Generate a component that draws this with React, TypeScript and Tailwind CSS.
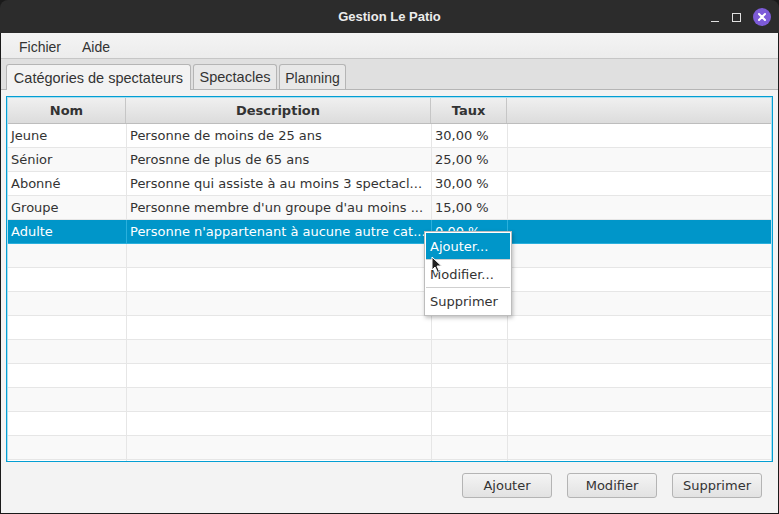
import React from 'react';

const rows = [
  { nom: 'Jeune', desc: 'Personne de moins de 25 ans', taux: '30,00 %' },
  { nom: 'Sénior', desc: 'Perosnne de plus de 65 ans', taux: '25,00 %' },
  { nom: 'Abonné', desc: 'Personne qui assiste à au moins 3 spectacl...', taux: '30,00 %' },
  { nom: 'Groupe', desc: "Personne membre d'un groupe d'au moins ...", taux: '15,00 %' },
  { nom: 'Adulte', desc: "Personne n'appartenant à aucune autre cat...", taux: '0,00 %' },
];

const emptyRows = Array.from({ length: 10 }, (_, i) => i);

const table = "font-['DejaVu_Sans',sans-serif] text-[13px]";

function Row({ nom, desc, taux, index, selected }: { nom: string; desc: string; taux: string; index: number; selected?: boolean }) {
  const bg = selected ? 'bg-[#0096c9] text-white' : index % 2 === 0 ? 'bg-white text-[#333]' : 'bg-[#f9f9f9] text-[#333]';
  const line = selected ? 'border-[#2ab0dd]' : 'border-[#e6e6e6]';
  return (
    <div className={`flex h-[24px] shrink-0 border-b ${line} ${bg}`}>
      <div className={`w-[119px] shrink-0 border-r ${line} pl-[3px] leading-[23px] whitespace-nowrap overflow-hidden`}>{nom}</div>
      <div className={`w-[305px] shrink-0 border-r ${line} pl-[3px] leading-[23px] whitespace-nowrap overflow-hidden`}>{desc}</div>
      <div className={`w-[76px] shrink-0 border-r ${line} pl-[3px] leading-[23px] whitespace-nowrap overflow-hidden`}>{taux}</div>
      <div className="flex-1" />
    </div>
  );
}

function Button({ label }: { label: string }) {
  return (
    <button className="w-[90px] h-[25px] rounded-[3px] border border-[#b4b4b4] bg-gradient-to-b from-[#f4f4f4] to-[#e2e2e2] text-[13px] text-[#333] font-['DejaVu_Sans',sans-serif] leading-none">
      {label}
    </button>
  );
}

export default function App() {
  return (
    <div className="w-[779px] h-[514px] bg-[#1a1a1a] flex flex-col overflow-hidden">
      {/* Title bar */}
      <div className="h-[33px] shrink-0 bg-[#2c2c2c] rounded-t-[8px] flex items-center relative">
        <div className="flex-1 text-center text-[13px] font-bold text-[#ececec] font-['Liberation_Sans',sans-serif]">Gestion Le Patio</div>
        <div className="absolute right-[8px] top-[8px] flex items-center gap-[10px]">
          <span className="block w-[8px] h-[1px] bg-[#e0e0e0] mt-[8px]" />
          <span className="block w-[9px] h-[9px] border border-[#e0e0e0] ml-[3px]" />
          <span className="w-[18px] h-[18px] rounded-full bg-[#7d5bd8] flex items-center justify-center ml-[2px]">
            <svg width="10" height="10" viewBox="0 0 10 10">
              <path d="M2 2 L8 8 M8 2 L2 8" stroke="white" strokeWidth="2" strokeLinecap="round" />
            </svg>
          </span>
        </div>
      </div>

      <div className="flex-1 flex flex-col mx-[1px] mb-[1px] bg-[#f3f3f3]">
        {/* Menu bar */}
        <div className="h-[26px] shrink-0 bg-gradient-to-b from-[#f4f4f4] to-[#ececec] border-b border-[#c6c6c6] flex items-center gap-[21px] pl-[18px] pt-[4px] text-[14px] text-[#333] font-['Liberation_Sans',sans-serif]">
          <span>Fichier</span>
          <span>Aide</span>
        </div>

        {/* Tab header */}
        <div className="h-[31px] shrink-0 bg-[#e0e0e0] flex items-end pl-[5px] gap-[2px] border-b border-[#b5b5b5] text-[14px] text-[#333] font-['Liberation_Sans',sans-serif]">
          <div className="w-[185px] h-[26px] -mb-[1px] pt-[2px] bg-[#f3f3f3] border border-b-0 border-[#b5b5b5] rounded-t-[3px] flex items-center justify-center text-[14.5px]">Catégories de spectateurs</div>
          <div className="w-[84px] h-[25px] pt-[2px] bg-[#e8e8e8] border border-b-0 border-[#b5b5b5] rounded-t-[3px] flex items-center justify-center text-[14.5px]">Spectacles</div>
          <div className="w-[67px] h-[25px] pt-[2px] bg-[#e8e8e8] border border-b-0 border-[#b5b5b5] rounded-t-[3px] flex items-center justify-center">Planning</div>
        </div>

        {/* Content */}
        <div className="flex-1 flex flex-col pt-[6px] px-[5px]">
          <div className={`relative h-[366px] shrink-0 border border-[#039ed3] shadow-[inset_0_0_0_1px_#a9dff0] bg-white flex flex-col overflow-hidden ${table}`}>
            {/* Header */}
            <div className="h-[26px] shrink-0 flex bg-gradient-to-b from-[#f0f0f0] to-[#dcdcdc] border-b border-[#bdbdbd] mx-[1px] mt-[1px] font-bold text-[#333]">
              <div className="w-[118px] shrink-0 border-r border-[#c6c6c6] text-center leading-[26px]">Nom</div>
              <div className="w-[305px] shrink-0 border-r border-[#c6c6c6] text-center leading-[26px]">Description</div>
              <div className="w-[76px] shrink-0 border-r border-[#c6c6c6] text-center leading-[26px]">Taux</div>
              <div className="flex-1" />
            </div>
            <div className="flex flex-col mx-[1px]">
              {rows.map((r, i) => (
                <Row key={r.nom} {...r} index={i} selected={i === 4} />
              ))}
              {emptyRows.map((i) => (
                <Row key={i} nom="" desc="" taux="" index={i + 5} />
              ))}
            </div>

            {/* Context menu */}
            <div className="absolute left-[417px] top-[134px] w-[88px] bg-white border border-[#bdbdbd] shadow-[1px_2px_4px_rgba(0,0,0,0.25)] p-[1px] text-[#333]">
              <div className="h-[27px] bg-[#0096c9] text-white pl-[4px] leading-[28px] border-b border-[#cfcfcf]">Ajouter...</div>
              <div className="h-[28px] pl-[4px] leading-[29px] border-b border-[#cfcfcf]">Modifier...</div>
              <div className="h-[26px] pl-[4px] leading-[28px]">Supprimer</div>
            </div>

            {/* Cursor */}
            <svg className="absolute left-[424px] top-[159px]" width="12" height="18" viewBox="0 0 12 18">
              <path d="M1 1 L1 14 L4 11 L6.5 16.5 L8.5 15.5 L6 10 L10.5 10 Z" fill="#222" stroke="white" strokeWidth="1" strokeLinejoin="round" />
            </svg>
          </div>

          {/* Buttons */}
          <div className="flex justify-end gap-[15px] pr-[11px] mt-[11px]">
            <Button label="Ajouter" />
            <Button label="Modifier" />
            <Button label="Supprimer" />
          </div>
        </div>
      </div>
    </div>
  );
}
